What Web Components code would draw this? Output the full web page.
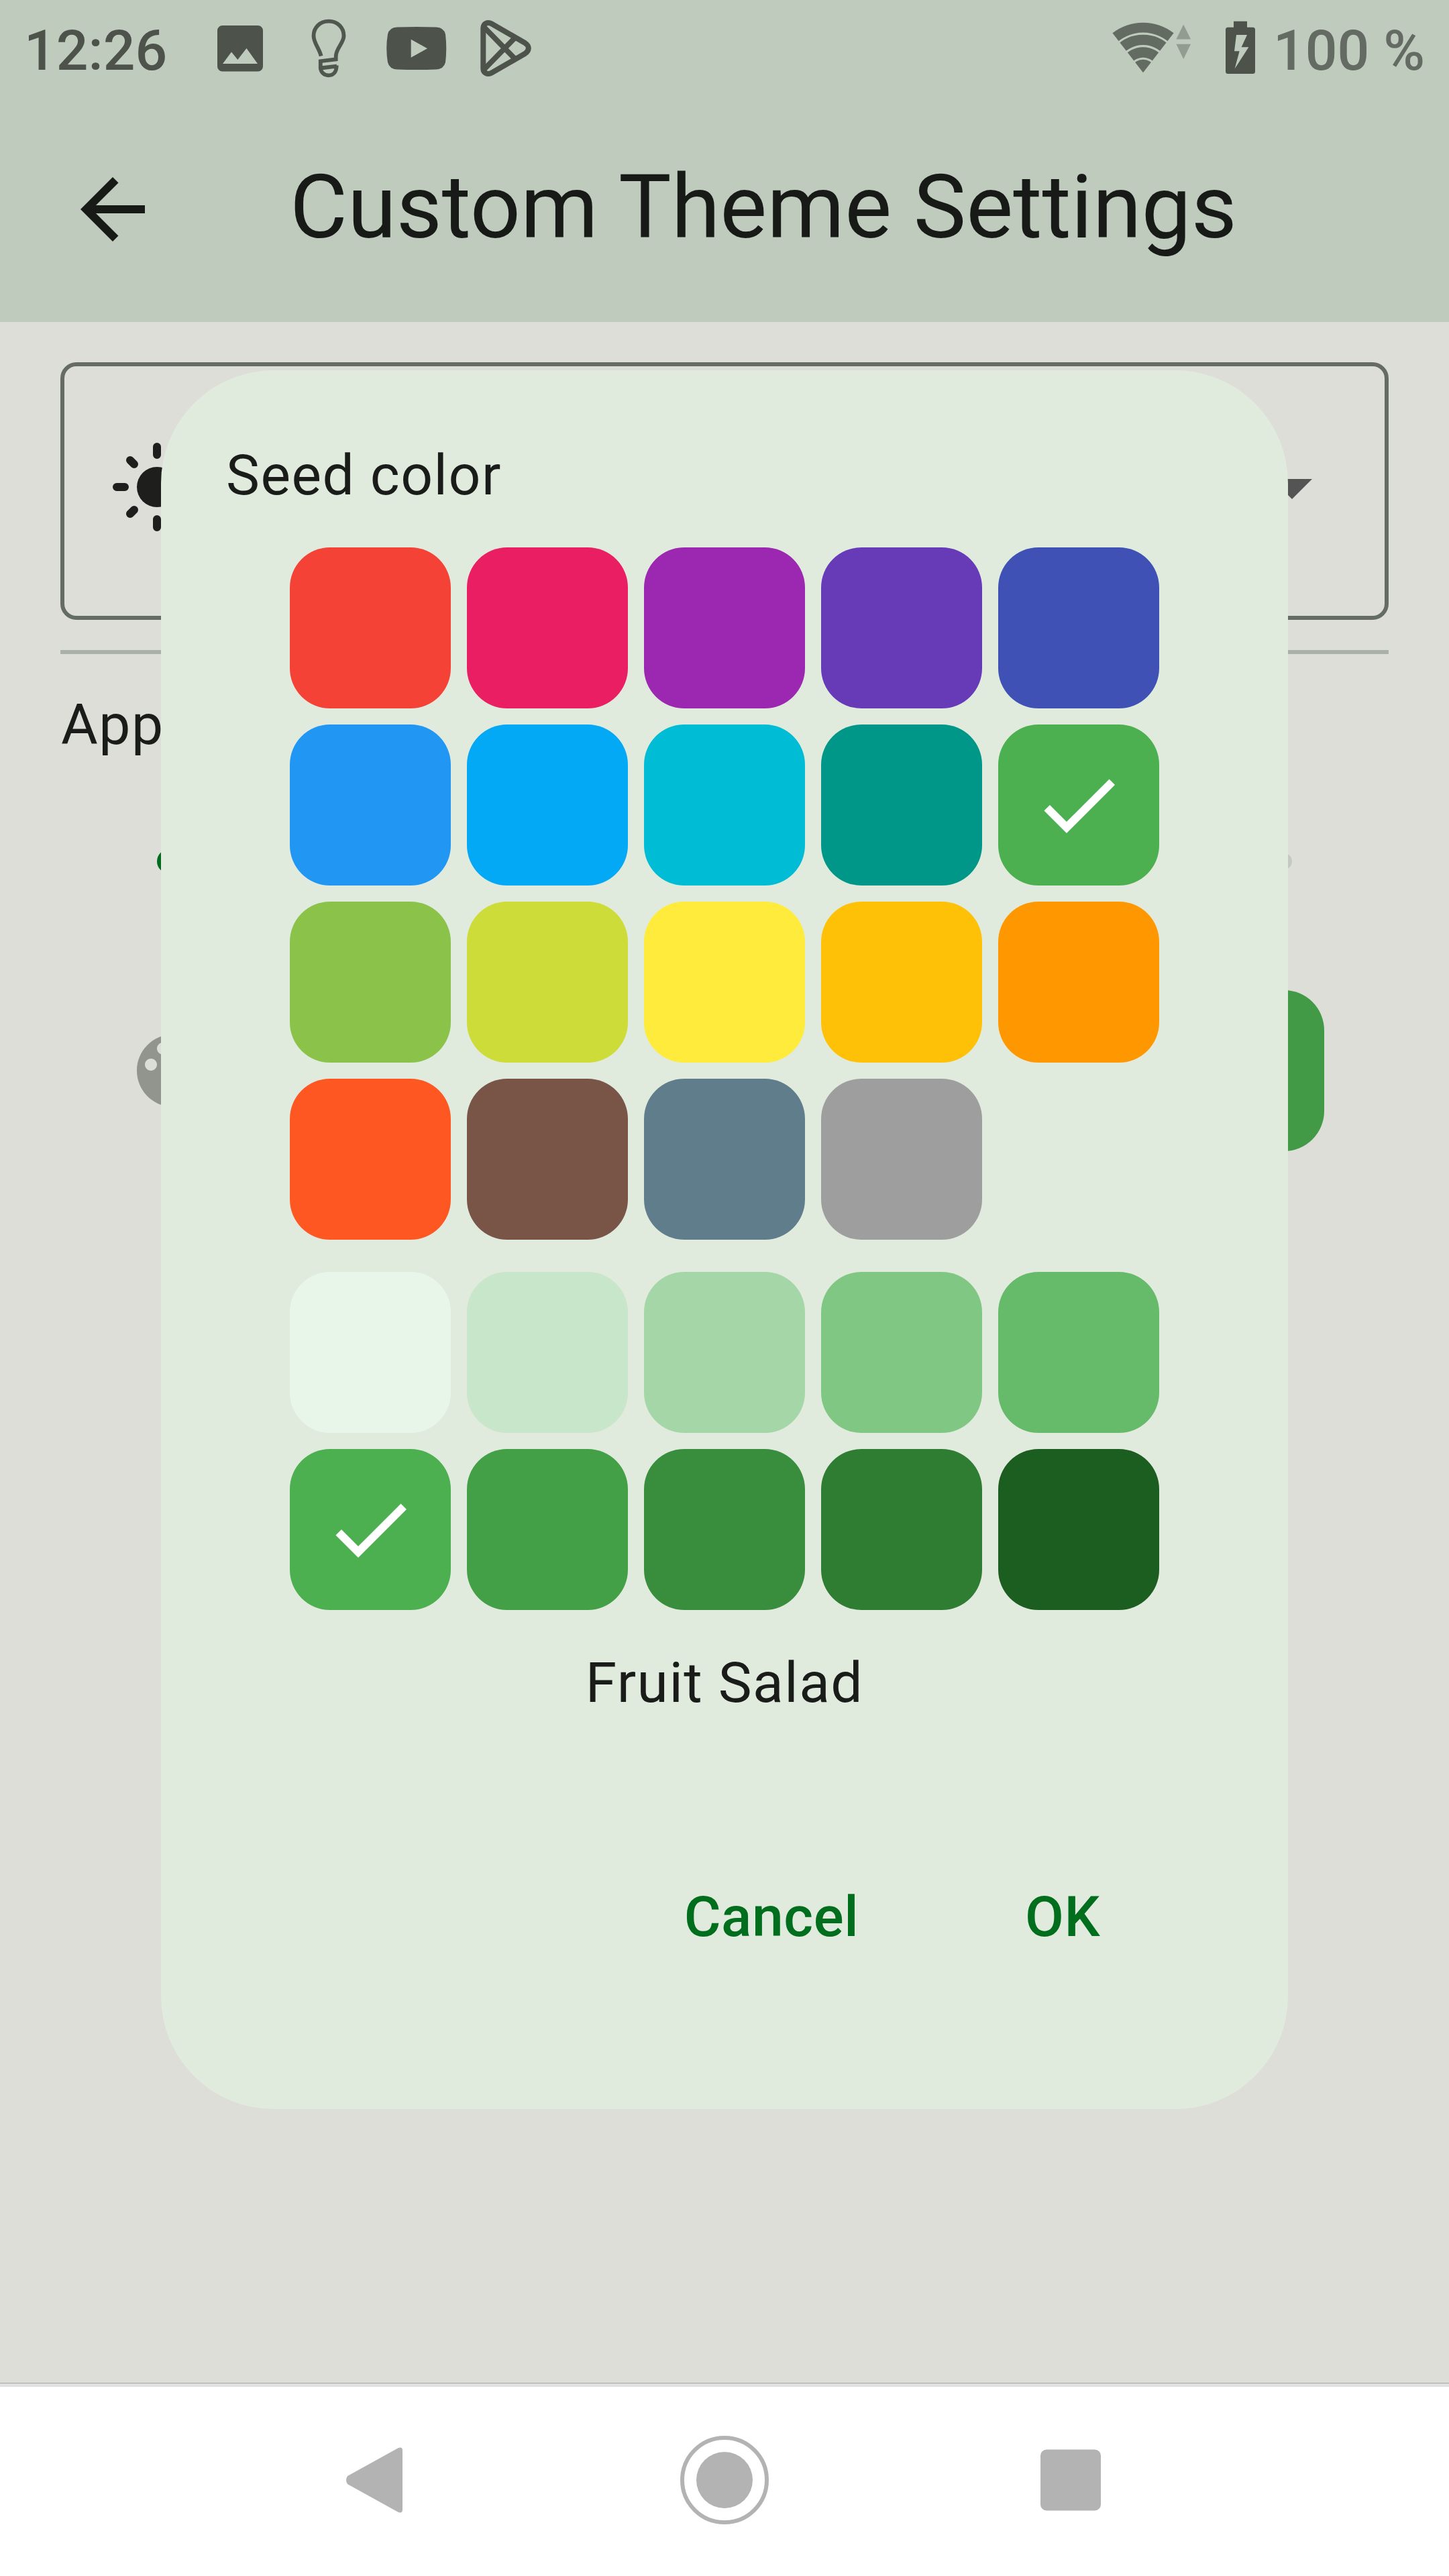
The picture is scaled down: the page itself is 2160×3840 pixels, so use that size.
<!DOCTYPE html>
<html lang="en">
<head>
<meta charset="utf-8">
<title>Custom Theme Settings</title>
<style>
html, body { margin: 0; width: 2160px; height: 3840px; overflow: hidden; }
body { font: 400 84px/120px Roboto, sans-serif; color: #1a1c19; }
</style>
</head>
<body>
<theme-screen>
  <status-bar slot="status" clock="12:26" battery="100 %"></status-bar>
  <app-header slot="header">Custom Theme Settings</app-header>
  <settings-list slot="content"></settings-list>
  <nav-bar slot="nav"></nav-bar>
  <color-dialog slot="dialog"></color-dialog>
</theme-screen>
<script>
const define = (name, html) => customElements.define(name, class extends HTMLElement {
  connectedCallback() {
    if (this.shadowRoot) return;
    const root = this.attachShadow({ mode: 'open' });
    root.innerHTML = '<style>:host,*{box-sizing:border-box}svg{display:block;flex:none}</style>' +
      (typeof html === 'function' ? html(this) : html);
  }
});

define('theme-screen', `
<style>
:host { display: flex; flex-direction: column; position: relative; width: 2160px; height: 3840px; background: #dddeD8; }
.top { background: #becbbd; height: 480px; flex: none; }
.body { flex: 1; min-height: 0; overflow: hidden; }
.overlay { position: absolute; left: 240px; top: 552px; width: 1680px; height: 2592px; }
</style>
<div class="top"><slot name="status"></slot><slot name="header"></slot></div>
<div class="body"><slot name="content"></slot></div>
<slot name="nav"></slot>
<div class="overlay"><slot name="dialog"></slot></div>`);

define('status-bar', el => `
<style>
:host { display: flex; align-items: center; height: 144px; padding: 0 36px; color: #4d534b; font-weight: 500; }
span { padding-top: 7px; }
.clock { width: 288px; }
.image { margin-right: 70px; }
.bulb { margin-right: 58px; }
.tube { margin-right: 48px; }
.wifi { margin-left: auto; margin-right: 50px; }
.cell { margin-right: 27px; }
.level { color: #646b62; }
</style>
<span class="clock">${el.getAttribute('clock')}</span>
<svg class="image" width="68" height="144" viewBox="324 0 68 144"><path fill="#4d534b" fill-rule="evenodd" d="M331.500 38H384.500a7.500 7.500 0 0 1 7.500 7.500V99a7.500 7.500 0 0 1-7.500 7.500H331.500a7.500 7.500 0 0 1-7.500-7.500V45.500a7.500 7.500 0 0 1 7.500-7.500zM345 77.500L332 95H384L367.500 72 354.300 89z"/></svg>
<svg class="bulb" width="56" height="144" viewBox="462 0 56 144"><path fill="none" stroke="#50574e" stroke-width="5.800" d="M478.600 83.500C476 72 467.500 64 467.500 53.500C467.500 41 477 31.700 490 31.700S512.500 41 512.500 53.500C512.500 64 500.700 72 500.700 84V88.400L477.800 91.200V102C479 109 484 112.300 490 112.300C497 112.300 501.700 107 501.700 97.500M478 101.500L502 98.600"/></svg>
<svg class="tube" width="90" height="144" viewBox="576 0 90 144"><path fill="#4d534b" fill-rule="evenodd" d="M592 40.600Q621 39.600 650 40.600Q661.500 41 664 51Q666.500 72 664 93Q661.500 103 650 103.500Q621 104.500 592 103.500Q580.500 103 578 93Q574.500 72 578 51Q580.500 41 592 40.600zM612.700 58.700V85.700L637 72.300z"/></svg>
<svg width="80" height="144" viewBox="714 0 80 144"><g fill="none" stroke="#4d534b" stroke-width="8" stroke-linejoin="round"><path d="M720.300 42C720.300 35 727 32 733 35.500L782.500 64C789.500 68.500 789.500 75.500 782.500 80L733 108.500C727 112 720.300 109 720.300 102z"/><path d="M722 41L766.500 86.500M722 103L766.500 57.500"/></g></svg>
<svg class="wifi" width="120" height="144" viewBox="1656 0 120 144">
  <path fill="#646b62" d="M1703 108.300L1657.400 49.300A74.500 74.500 0 0 1 1748.600 49.300z"/>
  <g fill="none" stroke="#becbbd" stroke-width="3.200"><path d="M1660 69.300A58 58 0 0 1 1746 69.300M1671 85.300A39 39 0 0 1 1735 85.300M1684 99.300A21 21 0 0 1 1722 99.300"/></g>
  <path fill="#939c91" d="M1763.200 36.500L1774 58.500H1752.400zM1752.400 65.800H1774L1763.200 88z"/>
</svg>
<svg class="cell" width="44" height="144" viewBox="1826 0 44 144"><path fill="#4d534b" fill-rule="evenodd" d="M1838 31.700H1858V40.700H1866.500Q1870 40.700 1870 44.200V106.500Q1870 110 1866.500 110H1829.500Q1826 110 1826 106.500V44.200Q1826 40.700 1829.500 40.700H1838zM1842 52L1839 76.300H1846.600L1839.600 102.500L1860.400 70.300H1849.600L1858 52z"/></svg>
<span class="level">${el.getAttribute('battery')}</span>`);

define('app-header', `
<style>
:host { display: flex; align-items: center; height: 336px; padding: 0 96px; }
h1 { margin: 0 0 6px 192px; font: 400 132px/168px Roboto, sans-serif; color: #171a16; white-space: nowrap; }
</style>
<svg width="144" height="144" viewBox="0 0 24 24"><path fill="#171a16" d="M20 11H7.830l5.590-5.590L12 4l-8 8 8 8 1.410-1.410L7.830 13H20v-2z"/></svg>
<h1><slot></slot></h1>`);

define('settings-list', `
<style>
:host { display: flex; flex-direction: column; padding: 60px 90px 0; }
.select { display: flex; align-items: center; justify-content: space-between; height: 384px; border: 6px solid #656c63; border-radius: 24px; padding: 0 66px 12px 66px; }
hr { width: 100%; height: 6px; margin: 45px 0; border: 0; background: #aab1a8; }
.label { height: 120px; padding: 1px 0 0 1px; letter-spacing: 1.500px; }
.track { display: flex; align-items: center; justify-content: space-between; height: 36px; margin-top: 126px; padding: 0 144px; }
.track i { border-radius: 50%; }
.on { width: 36px; height: 36px; background: #006b1d; }
.off { width: 24px; height: 24px; background: #c3cac1; }
.tile { display: flex; align-items: center; justify-content: space-between; height: 240px; margin-top: 174px; padding: 0 96px; }
.swatch { width: 240px; height: 240px; border-radius: 60px; background: #439a46; }
</style>
<div class="select">
  <svg width="144" height="144" viewBox="0 0 24 24"><circle cx="12" cy="12" r="5" fill="#1e1e1c"/><path fill="none" stroke="#1e1e1c" stroke-width="2" stroke-linecap="round" d="M2 12H4M20 12H22M12 2V4M12 20V22M5.330 5.330L6.330 6.330M17.670 17.670L18.670 18.670M5.330 18.670L6.330 17.670M17.670 6.330L18.670 5.330"/></svg>
  <svg width="144" height="144" viewBox="0 0 24 24"><path fill="#545454" d="M7 10l5 5 5-5z"/></svg>
</div>
<hr>
<div class="label">App</div>
<div class="track"><i class="on"></i><i class="off"></i></div>
<div class="tile">
  <svg width="144" height="144" viewBox="0 0 24 24"><path fill="#91958d" d="M12 3c-4.970 0-9 4.030-9 9s4.030 9 9 9c.830 0 1.500-.670 1.500-1.500 0-.390-.150-.740-.390-1.010-.230-.260-.380-.610-.380-.990 0-.830.670-1.500 1.500-1.500H16c2.760 0 5-2.240 5-5 0-4.420-4.030-8-9-8zm-5.500 9c-.830 0-1.500-.670-1.500-1.500S5.670 9 6.500 9 8 9.670 8 10.500 7.330 12 6.500 12zm3-4C8.670 8 8 7.330 8 6.500S8.670 5 9.500 5s1.500.670 1.500 1.500S10.330 8 9.500 8zm5 0c-.830 0-1.500-.670-1.500-1.500S13.670 5 14.500 5s1.500.670 1.500 1.500S15.330 8 14.500 8zm3 4c-.830 0-1.500-.670-1.500-1.500S16.670 9 17.500 9s1.500.670 1.500 1.500-.670 1.500-1.500 1.500z"/></svg>
  <div class="swatch"></div>
</div>`);

define('color-swatch', el => `
<style>
:host { display: flex; align-items: center; justify-content: center; width: 240px; height: 240px; border-radius: 60px; background: ${el.getAttribute('color')}; }
</style>
${el.hasAttribute('selected') ? '<svg width="144" height="144" viewBox="0 0 24 24"><path fill="#fff" d="M9 16.170L4.830 12l-1.420 1.410L9 19 21 7l-1.410-1.410z"/></svg>' : ''}`);

define('color-grid', el => `
<style>
:host { display: grid; grid-template-columns: repeat(5, 240px); gap: 24px; width: 1296px; }
</style>
${el.getAttribute('colors').split(' ').map((c, i) =>
  `<color-swatch color="${c}"${i === +el.getAttribute('selected') ? ' selected' : ''}></color-swatch>`).join('')}`);

define('color-dialog', `
<style>
:host { display: flex; flex-direction: column; align-items: center; width: 100%; height: 100%; border-radius: 168px; background: #e0ebde; padding: 97px 96px 0; letter-spacing: 1.500px; }
.title { align-self: flex-start; margin: 0 0 47px 1px; }
color-grid + color-grid { margin-top: 48px; }
.name { margin-top: 49px; }
.actions { align-self: flex-end; display: flex; gap: 48px; margin: 229px 48px 0 0; color: #006e1c; font-weight: 500; letter-spacing: .600px; text-align: center; }
.cancel { width: 388px; }
.ok { width: 384px; }
</style>
<div class="title">Seed color</div>
<color-grid selected="9" colors="#f44336 #e91e63 #9c27b0 #673ab7 #3f51b5 #2196f3 #03a9f4 #00bcd4 #009688 #4caf50 #8bc34a #cddc39 #ffeb3b #ffc107 #ff9800 #ff5722 #795548 #607d8b #9e9e9e"></color-grid>
<color-grid selected="5" colors="#e8f5e9 #c8e6c9 #a5d6a7 #81c784 #66bb6a #4caf50 #43a047 #388e3c #2e7d32 #1b5e20"></color-grid>
<div class="name">Fruit Salad</div>
<div class="actions"><div class="cancel">Cancel</div><div class="ok">OK</div></div>`);

define('nav-bar', `
<style>
:host { display: flex; flex: none; align-items: center; height: 288px; padding: 0 516px; background: #fff; border-top: 1px solid #a5a5a5; box-shadow: inset 0 5px #e0e0e0; }
.home { margin: 0 405px 0 414px; }
</style>
<svg width="84" height="144" viewBox="516 3624 84 144"><path fill="#b3b3b3" d="M518 3690L593 3648.500Q600 3645.500 600 3652V3740Q600 3746.500 593 3743.500L518 3702Q514 3696 518 3690z"/></svg>
<svg class="home" width="132" height="144" viewBox="1014 3624 132 144"><circle cx="1080" cy="3696" r="63" fill="none" stroke="#b3b3b3" stroke-width="6"/><circle cx="1080" cy="3696" r="42" fill="#b3b3b3"/></svg>
<svg width="90" height="144" viewBox="1551 3624 90 144"><rect x="1551" y="3650.500" width="90" height="91" rx="9" fill="#b3b3b3"/></svg>`);
</script>
</body>
</html>
